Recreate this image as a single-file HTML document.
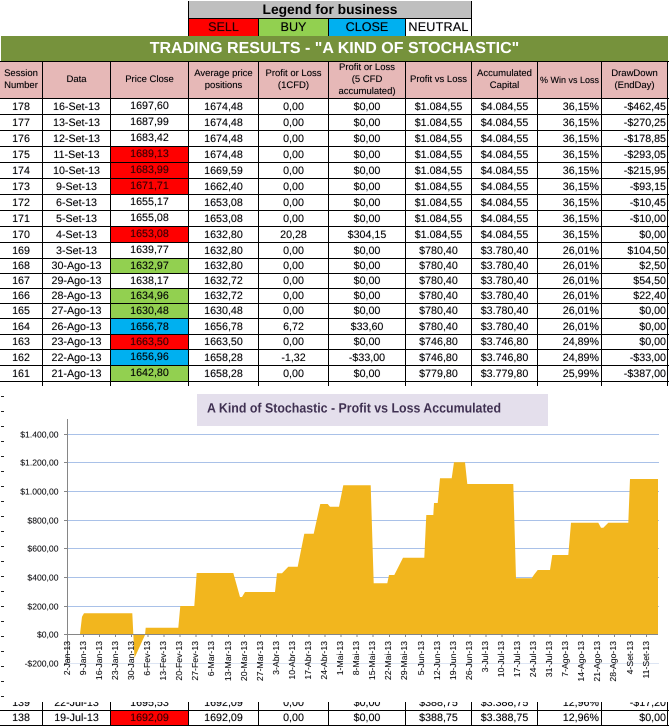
<!DOCTYPE html>
<html><head><meta charset="utf-8"><title>Trading Results</title>
<style>
html,body{margin:0;padding:0;background:#fff}
body{position:relative;width:669px;height:727px;overflow:hidden;font-family:"Liberation Sans",Arial,sans-serif;color:#000;text-rendering:geometricPrecision}
.abs{position:absolute}
table{position:absolute;left:0;border-collapse:separate;border-spacing:0;table-layout:fixed;width:669px;font-size:10.7px;text-shadow:0 0 .6px rgba(0,0,30,.45)}
td{padding:0;border-right:1px solid #000;border-bottom:1px solid #000;text-align:center;vertical-align:middle;white-space:nowrap;box-sizing:border-box;overflow:hidden;line-height:12px}
td:nth-child(9){text-align:right;padding-right:2px}
td:nth-child(10){text-align:right;padding-right:1px}
td:last-child{border-right:0}
tr.h td{background:#e6b8b7;font-size:9.5px;text-align:center;padding:0;border-top:1px solid #000}
tr.h td:last-child{background:#fff}
tr.t td{border-bottom:0;height:4px;font-size:1px;line-height:1px}
.s{background:#f00;color:#300}.b{background:#92d050}.c{background:#00b0f0}
.p{padding-bottom:2px}
.l{position:absolute;top:19px;height:17px;line-height:17px;text-align:center;font-size:12.6px;box-sizing:border-box;border-right:1px solid #000;text-shadow:0 0 .6px rgba(0,0,30,.6)}
</style></head><body>
<div class="abs" style="left:188px;top:1px;width:284px;height:17px;background:#bfbfbf;box-sizing:border-box;border-left:1px solid #000;border-right:1px solid #000;text-align:center;font-weight:bold;font-size:13.8px;line-height:17px">Legend for business</div>
<div class="abs" style="left:188px;top:18px;width:284px;height:1px;background:#000"></div>
<div class="abs" style="left:188px;top:18px;width:1px;height:18px;background:#000"></div>
<div class="l s" style="left:189px;width:70px;color:#200">SELL</div>
<div class="l b" style="left:259px;width:70px">BUY</div>
<div class="l c" style="left:329px;width:77px">CLOSE</div>
<div class="l" style="left:406px;width:66px;background:#fff;letter-spacing:.2px">NEUTRAL</div>
<div class="abs" style="left:1px;top:36px;width:667px;height:25px;background:#76923c;color:#fff;font-weight:bold;font-size:16px;line-height:25px;text-align:center;padding-left:0">TRADING RESULTS - "A KIND OF STOCHASTIC"</div>

<table style="top:61px">
<colgroup><col style="width:43px"><col style="width:68px"><col style="width:78px"><col style="width:70px"><col style="width:70px"><col style="width:77px"><col style="width:66px"><col style="width:66px"><col style="width:64px"><col style="width:66px"><col style="width:1px"></colgroup>
<tr class="h" style="height:38px"><td>Session<br>Number</td><td>Data</td><td>Price Close</td><td>Average price<br>positions</td><td>Profit or Loss<br>(1CFD)</td><td>Profit or Loss<br>(5 CFD<br>accumulated)</td><td>Profit vs Loss</td><td>Accumulated<br>Capital</td><td style="font-size:9px">% Win vs Loss</td><td>DrawDown<br>(EndDay)</td><td></td></tr>
<tr style="height:16px"><td>178</td><td>16-Set-13</td><td class="p">1697,60</td><td>1674,48</td><td>0,00</td><td>$0,00</td><td>$1.084,55</td><td>$4.084,55</td><td>36,15%</td><td>-$462,45</td><td></td></tr>
<tr style="height:16px"><td>177</td><td>13-Set-13</td><td class="p">1687,99</td><td>1674,48</td><td>0,00</td><td>$0,00</td><td>$1.084,55</td><td>$4.084,55</td><td>36,15%</td><td>-$270,25</td><td></td></tr>
<tr style="height:16px"><td>176</td><td>12-Set-13</td><td class="p">1683,42</td><td>1674,48</td><td>0,00</td><td>$0,00</td><td>$1.084,55</td><td>$4.084,55</td><td>36,15%</td><td>-$178,85</td><td></td></tr>
<tr style="height:16px"><td>175</td><td>11-Set-13</td><td class="s p">1689,13</td><td>1674,48</td><td>0,00</td><td>$0,00</td><td>$1.084,55</td><td>$4.084,55</td><td>36,15%</td><td>-$293,05</td><td></td></tr>
<tr style="height:16px"><td>174</td><td>10-Set-13</td><td class="s p">1683,99</td><td>1669,59</td><td>0,00</td><td>$0,00</td><td>$1.084,55</td><td>$4.084,55</td><td>36,15%</td><td>-$215,95</td><td></td></tr>
<tr style="height:16px"><td>173</td><td>9-Set-13</td><td class="s p">1671,71</td><td>1662,40</td><td>0,00</td><td>$0,00</td><td>$1.084,55</td><td>$4.084,55</td><td>36,15%</td><td>-$93,15</td><td></td></tr>
<tr style="height:16px"><td>172</td><td>6-Set-13</td><td class="p">1655,17</td><td>1653,08</td><td>0,00</td><td>$0,00</td><td>$1.084,55</td><td>$4.084,55</td><td>36,15%</td><td>-$10,45</td><td></td></tr>
<tr style="height:16px"><td>171</td><td>5-Set-13</td><td class="p">1655,08</td><td>1653,08</td><td>0,00</td><td>$0,00</td><td>$1.084,55</td><td>$4.084,55</td><td>36,15%</td><td>-$10,00</td><td></td></tr>
<tr style="height:16px"><td>170</td><td>4-Set-13</td><td class="s p">1653,08</td><td>1632,80</td><td>20,28</td><td>$304,15</td><td>$1.084,55</td><td>$4.084,55</td><td>36,15%</td><td>$0,00</td><td></td></tr>
<tr style="height:16px"><td>169</td><td>3-Set-13</td><td class="p">1639,77</td><td>1632,80</td><td>0,00</td><td>$0,00</td><td>$780,40</td><td>$3.780,40</td><td>26,01%</td><td>$104,50</td><td></td></tr>
<tr style="height:15px"><td>168</td><td>30-Ago-13</td><td class="b">1632,97</td><td>1632,80</td><td>0,00</td><td>$0,00</td><td>$780,40</td><td>$3.780,40</td><td>26,01%</td><td>$2,50</td><td></td></tr>
<tr style="height:15px"><td>167</td><td>29-Ago-13</td><td>1638,17</td><td>1632,72</td><td>0,00</td><td>$0,00</td><td>$780,40</td><td>$3.780,40</td><td>26,01%</td><td>$54,50</td><td></td></tr>
<tr style="height:15px"><td>166</td><td>28-Ago-13</td><td class="b">1634,96</td><td>1632,72</td><td>0,00</td><td>$0,00</td><td>$780,40</td><td>$3.780,40</td><td>26,01%</td><td>$22,40</td><td></td></tr>
<tr style="height:15px"><td>165</td><td>27-Ago-13</td><td class="b">1630,48</td><td>1630,48</td><td>0,00</td><td>$0,00</td><td>$780,40</td><td>$3.780,40</td><td>26,01%</td><td>$0,00</td><td></td></tr>
<tr style="height:16px"><td>164</td><td>26-Ago-13</td><td class="c">1656,78</td><td>1656,78</td><td>6,72</td><td>$33,60</td><td>$780,40</td><td>$3.780,40</td><td>26,01%</td><td>$0,00</td><td></td></tr>
<tr style="height:15px"><td>163</td><td>23-Ago-13</td><td class="s">1663,50</td><td>1663,50</td><td>0,00</td><td>$0,00</td><td>$746,80</td><td>$3.746,80</td><td>24,89%</td><td>$0,00</td><td></td></tr>
<tr style="height:16px"><td>162</td><td>22-Ago-13</td><td class="c p">1656,96</td><td>1658,28</td><td>-1,32</td><td>-$33,00</td><td>$746,80</td><td>$3.746,80</td><td>24,89%</td><td>-$33,00</td><td></td></tr>
<tr style="height:16px"><td>161</td><td>21-Ago-13</td><td class="b p">1642,80</td><td>1658,28</td><td>0,00</td><td>$0,00</td><td>$779,80</td><td>$3.779,80</td><td>25,99%</td><td>-$387,00</td><td></td></tr>
<tr class="t"><td></td><td></td><td></td><td></td><td></td><td></td><td></td><td></td><td></td><td></td><td></td></tr>
</table>

<svg class="abs" style="left:0;top:0" width="669" height="727" viewBox="0 0 669 727">
<rect x="197" y="394" width="351" height="32" fill="#e4dfec"/>
<text x="207" y="412.5" font-family="Liberation Sans" font-weight="bold" font-size="13.5" fill="#403152" textLength="294" lengthAdjust="spacingAndGlyphs">A Kind of Stochastic - Profit vs Loss Accumulated</text>
<path d="M1 396h3M1 411h3M1 426h3M1 441h3M1 456h3M1 471h3M1 486h3M1 501h3M1 516h3M1 531h3M1 546h3M1 561h3M1 576h3M1 591h3M1 606h3M1 621h3M1 636h3M1 651h3M1 666h3M1 681h3M1 696h3" stroke="#222" stroke-width="1" fill="none" transform="translate(0,.5)"/>
<path d="M67 434.5H659M67 462.5H659M67 491.5H659M67 520.5H659M67 548.5H659M67 577.5H659M67 606.5H659" stroke="#a9c1e8" stroke-width="1" fill="none"/>
<path d="M67 663.5H659" stroke="#dde5f3" stroke-width="1" fill="none"/>
<polygon fill="#f2b61e" points="80,634 82,616.7 84,613.3 132.3,613.3 133.3,634 134.5,658 145,635 145.7,627.7 178.3,627.7 180.3,606 194.3,606 196.7,573 233.3,573 240,597 242,597 245,592 275,592 277,573.3 282,573.3 288.3,566.7 297.7,566.7 304.3,533.7 313.7,533.7 320.3,504 327.7,504 330,506.7 339,506.7 343.3,485.3 370.7,485.3 373.7,583.3 387.3,583.3 389,575 394.3,575 403,557.7 424.3,557.7 426.3,515 433.3,515 434,503 437.7,503 440,478.3 451.7,478.3 454,462.3 465,462.3 467.3,484 513.3,484 516,578.3 531.7,578.3 534,574.7 537.7,570 550,570 552.3,555 568.3,555 571,522.7 598.3,522.7 601,527.7 603.3,527.7 608.3,522.7 628.3,522.7 630,479 658,479 658,634"/>
<path d="M67.5 419V663M64 434.5h3M64 462.5h3M64 491.5h3M64 520.5h3M64 548.5h3M64 577.5h3M64 606.5h3M64 634.5h3M64 663.5h3M67 634.5H658" stroke="#868686" stroke-width="1" fill="none"/>
<path d="M67.5 634v3M83.5 634v3M99.5 634v3M115.5 634v3M131.5 634v3M148 634v3M164 634v3M180 634v3M196 634v3M212 634v3M228.5 634v3M244.5 634v3M260.5 634v3M276.5 634v3M292.5 634v3M309 634v3M325 634v3M341 634v3M357 634v3M373 634v3M389.5 634v3M405.5 634v3M421.5 634v3M437.5 634v3M453.5 634v3M470 634v3M486 634v3M502 634v3M518 634v3M534 634v3M550 634v3M566.5 634v3M582.5 634v3M598.5 634v3M614.5 634v3M630.5 634v3M646.5 634v3" stroke="#868686" stroke-width="1" fill="none"/>
<g font-family="Liberation Sans" font-size="8.6" fill="#111" text-anchor="end" style="text-shadow:0 0 .5px rgba(0,0,40,.4)">
<text x="58.5" y="437.5">$1.400,00</text>
<text x="58.5" y="465.5">$1.200,00</text>
<text x="58.5" y="494.5">$1.000,00</text>
<text x="58.5" y="523.5">$800,00</text>
<text x="58.5" y="551.5">$600,00</text>
<text x="58.5" y="580.5">$400,00</text>
<text x="58.5" y="609.5">$200,00</text>
<text x="58.5" y="637.5">$0,00</text>
<text x="58.5" y="666.5">-$200,00</text>
</g>
<g font-family="Liberation Sans" font-size="8.7" fill="#111" text-anchor="end" style="text-shadow:0 0 .5px rgba(0,0,40,.4)">
<text transform="translate(70,641) rotate(-90)">2-Jan-13</text>
<text transform="translate(86,641) rotate(-90)">9-Jan-13</text>
<text transform="translate(102,641) rotate(-90)">16-Jan-13</text>
<text transform="translate(118,641) rotate(-90)">23-Jan-13</text>
<text transform="translate(134,641) rotate(-90)">30-Jan-13</text>
<text transform="translate(150,641) rotate(-90)">6-Fev-13</text>
<text transform="translate(166,641) rotate(-90)">13-Fev-13</text>
<text transform="translate(182,641) rotate(-90)">20-Fev-13</text>
<text transform="translate(198,641) rotate(-90)">27-Fev-13</text>
<text transform="translate(214,641) rotate(-90)">6-Mar-13</text>
<text transform="translate(231,641) rotate(-90)">13-Mar-13</text>
<text transform="translate(247,641) rotate(-90)">20-Mar-13</text>
<text transform="translate(263,641) rotate(-90)">27-Mar-13</text>
<text transform="translate(279,641) rotate(-90)">3-Abr-13</text>
<text transform="translate(295,641) rotate(-90)">10-Abr-13</text>
<text transform="translate(311,641) rotate(-90)">17-Abr-13</text>
<text transform="translate(327,641) rotate(-90)">24-Abr-13</text>
<text transform="translate(343,641) rotate(-90)">1-Mai-13</text>
<text transform="translate(359,641) rotate(-90)">8-Mai-13</text>
<text transform="translate(375,641) rotate(-90)">15-Mai-13</text>
<text transform="translate(391,641) rotate(-90)">22-Mai-13</text>
<text transform="translate(407,641) rotate(-90)">29-Mai-13</text>
<text transform="translate(424,641) rotate(-90)">5-Jun-13</text>
<text transform="translate(440,641) rotate(-90)">12-Jun-13</text>
<text transform="translate(456,641) rotate(-90)">19-Jun-13</text>
<text transform="translate(472,641) rotate(-90)">26-Jun-13</text>
<text transform="translate(488,641) rotate(-90)">3-Jul-13</text>
<text transform="translate(504,641) rotate(-90)">10-Jul-13</text>
<text transform="translate(520,641) rotate(-90)">17-Jul-13</text>
<text transform="translate(536,641) rotate(-90)">24-Jul-13</text>
<text transform="translate(552,641) rotate(-90)">31-Jul-13</text>
<text transform="translate(568,641) rotate(-90)">7-Ago-13</text>
<text transform="translate(584,641) rotate(-90)">14-Ago-13</text>
<text transform="translate(600,641) rotate(-90)">21-Ago-13</text>
<text transform="translate(616,641) rotate(-90)">28-Ago-13</text>
<text transform="translate(633,641) rotate(-90)">4-Set-13</text>
<text transform="translate(649,641) rotate(-90)">11-Set-13</text>
</g>
</svg>

<div class="abs" style="left:0;top:702px;width:669px;height:25px;overflow:hidden">
<table style="top:-6px">
<colgroup><col style="width:43px"><col style="width:68px"><col style="width:78px"><col style="width:70px"><col style="width:70px"><col style="width:77px"><col style="width:66px"><col style="width:66px"><col style="width:64px"><col style="width:66px"><col style="width:1px"></colgroup>
<tr style="height:15px"><td>139</td><td>22-Jul-13</td><td>1695,53</td><td>1692,09</td><td>0,00</td><td>$0,00</td><td>$388,75</td><td>$3.388,75</td><td>12,96%</td><td>-$17,20</td><td></td></tr>
<tr style="height:15px"><td>138</td><td>19-Jul-13</td><td class="s">1692,09</td><td>1692,09</td><td>0,00</td><td>$0,00</td><td>$388,75</td><td>$3.388,75</td><td>12,96%</td><td>$0,00</td><td></td></tr>
</table>
</div>
</body></html>
